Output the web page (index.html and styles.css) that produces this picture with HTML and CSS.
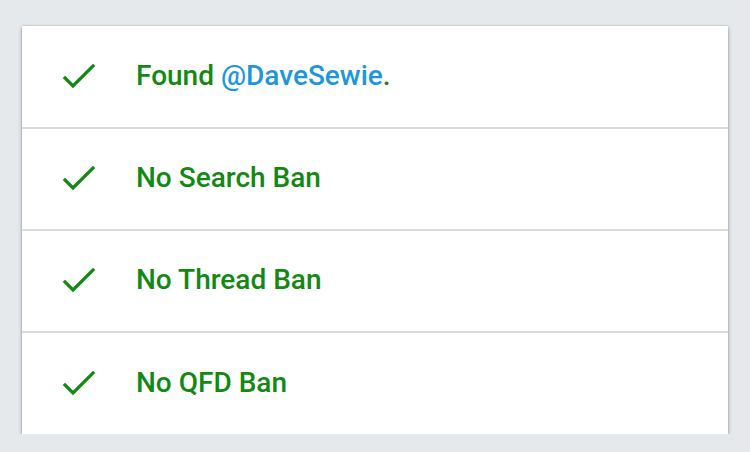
FILE: index.html
```html
<!DOCTYPE html>
<html>
<head>
<meta charset="utf-8">
<link rel="stylesheet" href="styles.css">
</head>
<body>
<div class="card">
  <div class="row first">
    <svg class="check" viewBox="0 0 36 30" width="36" height="30"><polyline points="3,16 11,24 31,4"/></svg>
    <span class="label">Found <span class="user">@DaveSewie</span>.</span>
  </div>
  <div class="row">
    <svg class="check" viewBox="0 0 36 30" width="36" height="30"><polyline points="3,16 11,24 31,4"/></svg>
    <span class="label">No Search Ban</span>
  </div>
  <div class="row">
    <svg class="check" viewBox="0 0 36 30" width="36" height="30"><polyline points="3,16 11,24 31,4"/></svg>
    <span class="label">No Thread Ban</span>
  </div>
  <div class="row">
    <svg class="check" viewBox="0 0 36 30" width="36" height="30"><polyline points="3,16 11,24 31,4"/></svg>
    <span class="label">No QFD Ban</span>
  </div>
</div>
</body>
</html>
```

FILE: styles.css
```css
html, body {
  margin: 0;
  padding: 0;
  background: #e6e9ec;
}
body {
  padding: 26px 22px 0 22px;
  font-family: Roboto, "Liberation Sans", sans-serif;
}
.card {
  width: 706px;
  background: #ffffff;
  box-shadow: 0 2px 4px rgba(0, 0, 0, 0.3), 0 0 2px rgba(0, 0, 0, 0.2);
}
.row {
  height: 100px;
  display: flex;
  align-items: center;
  border-bottom: 2px solid #dcdcdc;
}
.row.first {
  height: 101px;
}
.row:last-child {
  border-bottom: none;
  height: 101px;
}
.check {
  margin-left: 40px;
  margin-right: 38px;
  flex: none;
}
.check polyline {
  fill: none;
  stroke: #138913;
  stroke-width: 3.2;
  stroke-linecap: square;
}
.label {
  font-size: 28px;
  font-weight: 500;
  color: #138913;
  padding-bottom: 3px;
}
.user {
  color: #1e96dc;
}
```
